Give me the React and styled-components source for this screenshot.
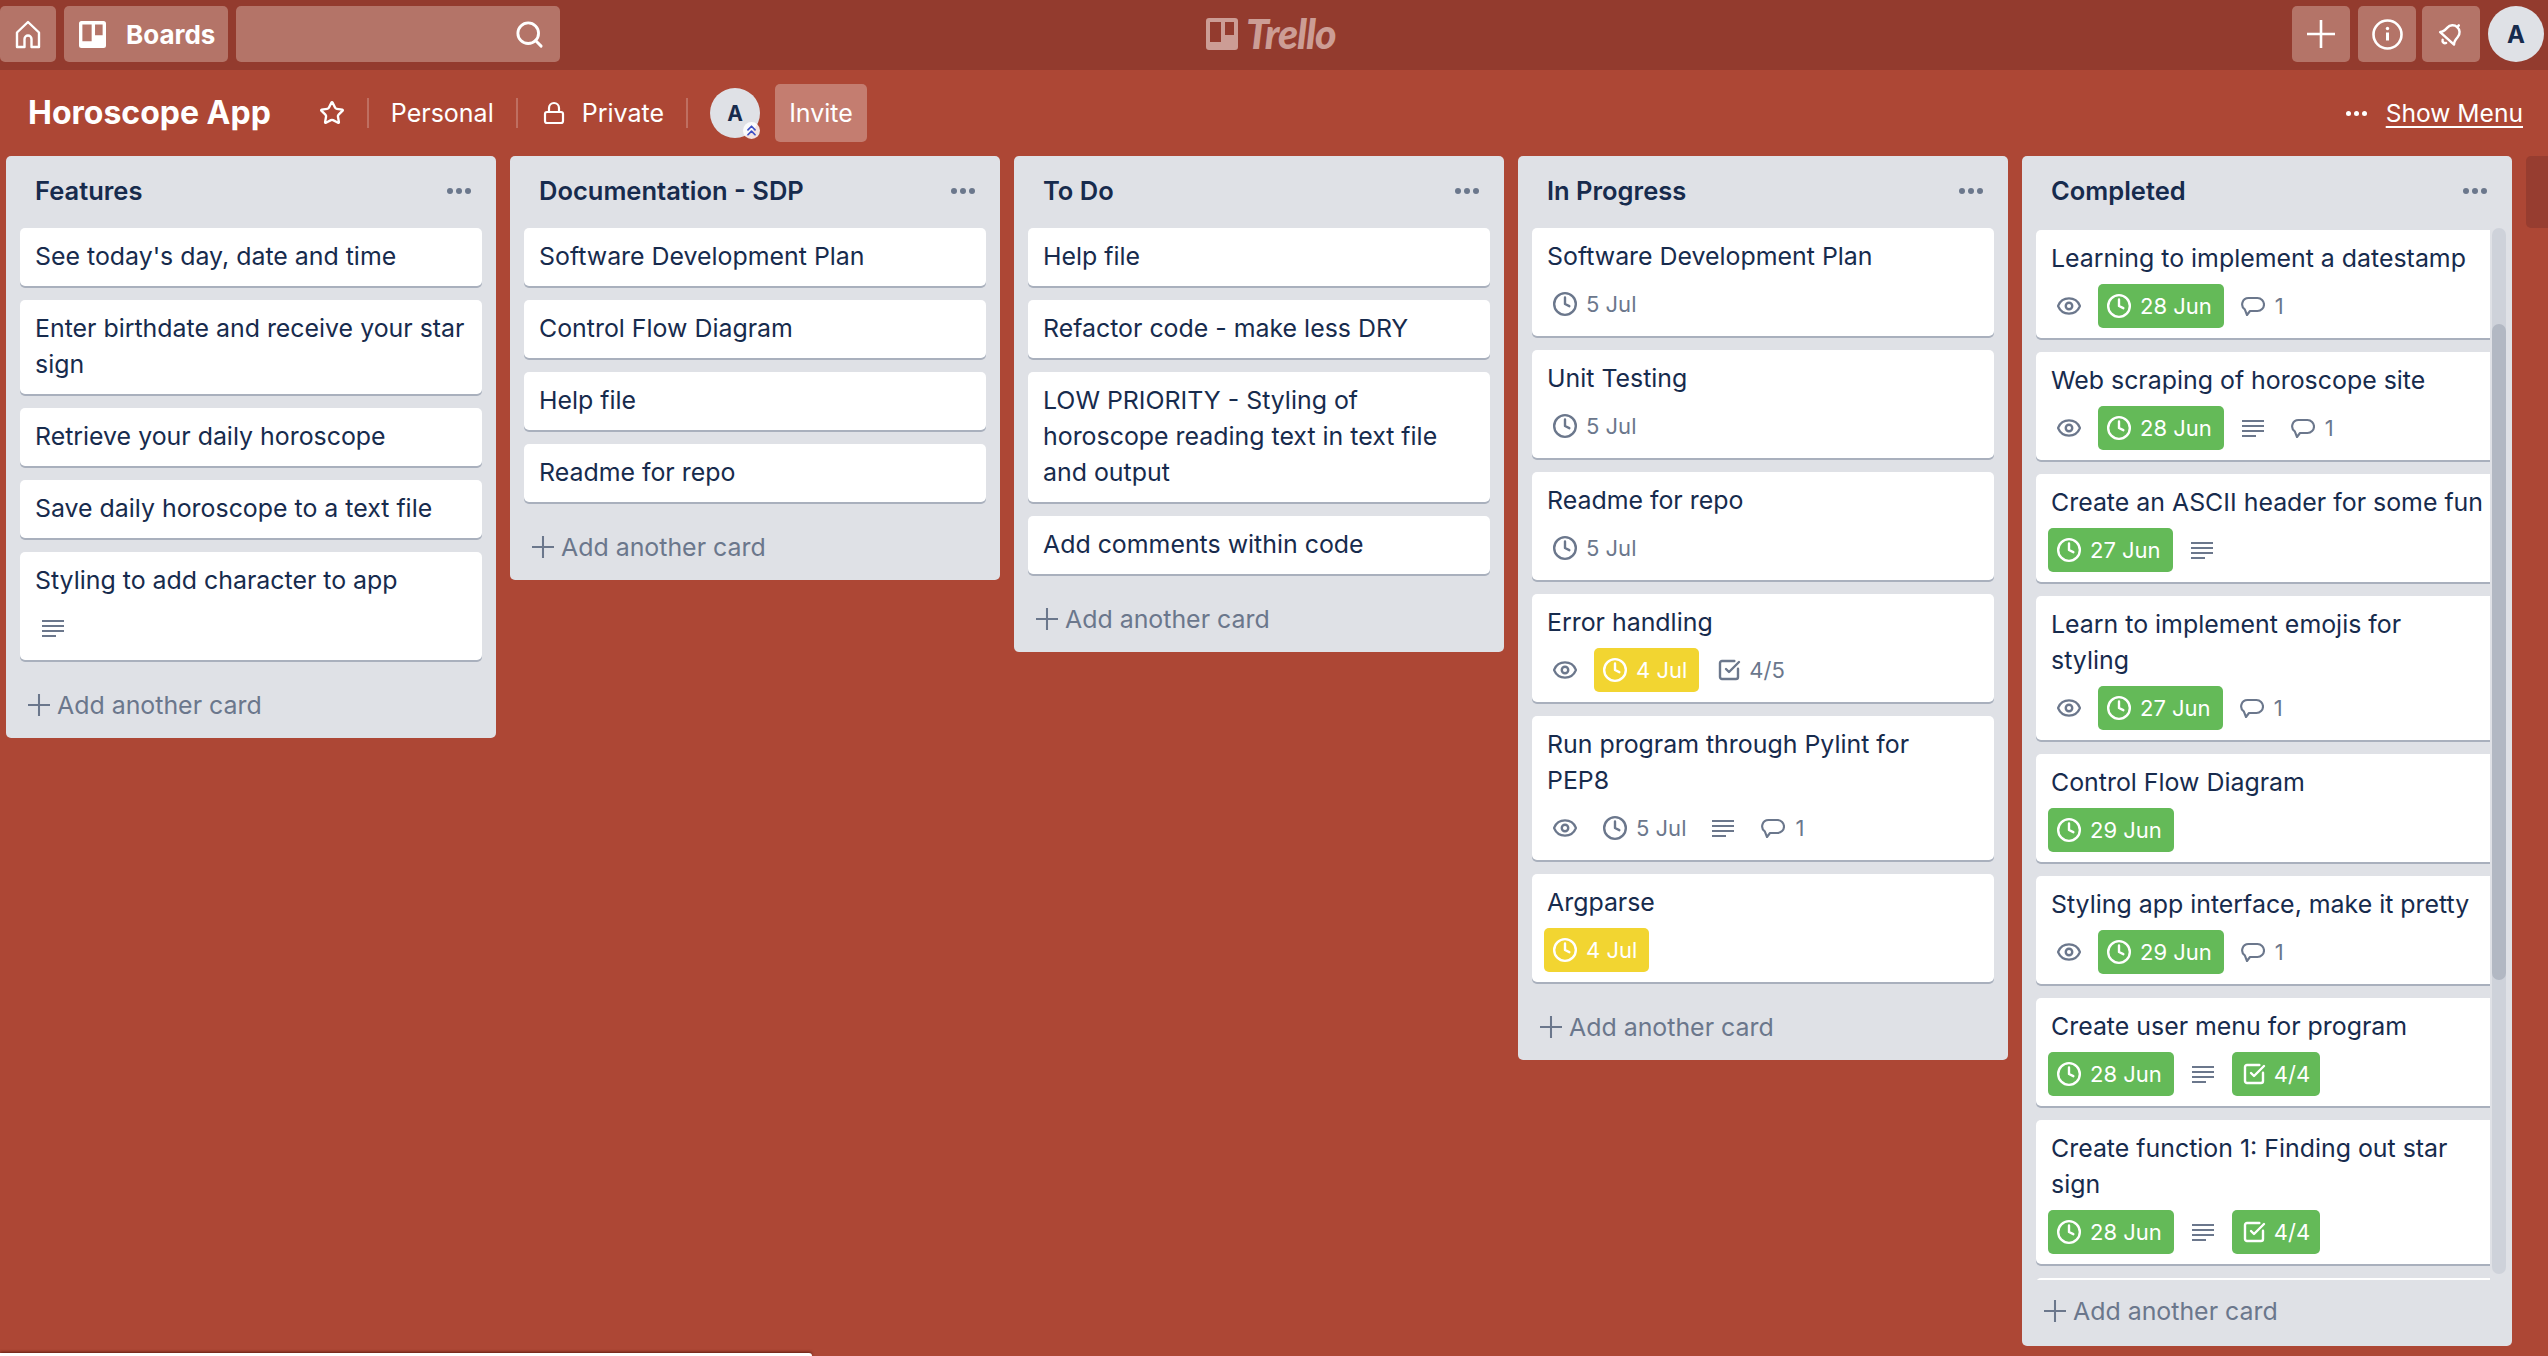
import React from 'react'
import styled, { createGlobalStyle } from 'styled-components'
import { ChevronsUp, Clock, Eye, Lock, Search, SquareCheckBig, Star } from 'lucide-react'

const GlobalStyle = createGlobalStyle`
  html, body {
    margin: 0;
    height: 100%;
    overflow: hidden;
    background: #ad4735;
    font-family: Inter, "Noto Sans", "Liberation Sans", sans-serif;
  }
`

const lists = [
  {
    name: 'Features',
    cards: [
      { title: "See today's day, date and time" },
      { title: 'Enter birthdate and receive your star\nsign' },
      { title: 'Retrieve your daily horoscope' },
      { title: 'Save daily horoscope to a text file' },
      { title: 'Styling to add character to app', desc: true },
    ],
  },
  {
    name: 'Documentation - SDP',
    cards: [
      { title: 'Software Development Plan' },
      { title: 'Control Flow Diagram' },
      { title: 'Help file' },
      { title: 'Readme for repo' },
    ],
  },
  {
    name: 'To Do',
    cards: [
      { title: 'Help file' },
      { title: 'Refactor code - make less DRY' },
      { title: 'LOW PRIORITY - Styling of\nhoroscope reading text in text file\nand output' },
      { title: 'Add comments within code' },
    ],
  },
  {
    name: 'In Progress',
    cards: [
      { title: 'Software Development Plan', date: '5 Jul' },
      { title: 'Unit Testing', date: '5 Jul' },
      { title: 'Readme for repo', date: '5 Jul' },
      { title: 'Error handling', eye: true, date: '4 Jul', dateColor: 'yellow', check: '4/5' },
      { title: 'Run program through Pylint for\nPEP8', eye: true, date: '5 Jul', desc: true, comments: 1 },
      { title: 'Argparse', date: '4 Jul', dateColor: 'yellow' },
    ],
  },
  {
    name: 'Completed',
    scrolling: true,
    cards: [
      { title: 'Learning to implement a datestamp', eye: true, date: '28 Jun', dateColor: 'green', comments: 1 },
      { title: 'Web scraping of horoscope site', eye: true, date: '28 Jun', dateColor: 'green', desc: true, comments: 1 },
      { title: 'Create an ASCII header for some fun', date: '27 Jun', dateColor: 'green', desc: true },
      { title: 'Learn to implement emojis for\nstyling', eye: true, date: '27 Jun', dateColor: 'green', comments: 1 },
      { title: 'Control Flow Diagram', date: '29 Jun', dateColor: 'green' },
      { title: 'Styling app interface, make it pretty', eye: true, date: '29 Jun', dateColor: 'green', comments: 1 },
      { title: 'Create user menu for program', date: '28 Jun', dateColor: 'green', desc: true, check: '4/4', checkColor: 'green' },
      { title: 'Create function 1: Finding out star\nsign', date: '28 Jun', dateColor: 'green', desc: true, check: '4/4', checkColor: 'green' },
      { title: '' },
    ],
  },
]

const badgeColors = { green: '#64ba58', yellow: '#f2d531' }

export default function App() {
  return (
    <Page>
      <GlobalStyle />
      <TopBar>
        <TopGroup>
          <HomeButton aria-label="Home"><HomeIcon /></HomeButton>
          <BoardsButton><BoardsIcon size={27} /> Boards</BoardsButton>
          <SearchBox><Search size={31} strokeWidth={2.2} color="#fff" /></SearchBox>
        </TopGroup>
        <Logo>
          <BoardsIcon size={32} />
          <LogoText>Trello</LogoText>
        </Logo>
        <TopRight>
          <SquareButton aria-label="Create"><PlusIcon size={28} /></SquareButton>
          <SquareButton aria-label="Info"><InfoIcon /></SquareButton>
          <BellButton aria-label="Notifications"><BellIcon /></BellButton>
          <UserAvatar>A</UserAvatar>
        </TopRight>
      </TopBar>

      <BoardBar>
        <BoardTitle>Horoscope App</BoardTitle>
        <StarIcon size={26} strokeWidth={2.2} color="#fff" />
        <Divider />
        <BarText>Personal</BarText>
        <Divider />
        <PrivateGroup>
          <Lock size={24} strokeWidth={2.2} color="#fff" />
          <BarText>Private</BarText>
        </PrivateGroup>
        <Divider />
        <MemberAvatar>
          A
          <AdminMark><ChevronsUp size={17} strokeWidth={2.4} color="#3d4fc4" /></AdminMark>
        </MemberAvatar>
        <InviteButton>Invite</InviteButton>
        <MenuLink>
          <MenuDots><i /><i /><i /></MenuDots>
          <ShowMenu>Show Menu</ShowMenu>
        </MenuLink>
      </BoardBar>

      <Board>
        {lists.map((list) => <BoardList key={list.name} list={list} />)}
        <AddList />
      </Board>
      <BottomStrip />
    </Page>
  )
}

function BoardList({ list }) {
  const cards = list.cards.map((card, i) => <BoardCard key={i} card={card} />)
  return (
    <List>
      <ListHeader>
        <ListName>{list.name}</ListName>
        <ListDots><i /><i /><i /></ListDots>
      </ListHeader>
      {list.scrolling ? (
        <ScrollRow>
          <ScrollClip>{cards}</ScrollClip>
          <ScrollTrack><ScrollThumb /></ScrollTrack>
        </ScrollRow>
      ) : (
        <Cards>{cards}</Cards>
      )}
      <AddCard $scrolling={list.scrolling}>
        <PlusIcon size={22} />
        Add another card
      </AddCard>
    </List>
  )
}

function BoardCard({ card }) {
  const hasMeta = card.eye || card.date || card.desc || card.check || card.comments
  return (
    <Card>
      <CardTitle $meta={hasMeta}>{card.title}</CardTitle>
      {hasMeta && (
        <Meta>
          {card.eye && <MetaItem><Eye size={26} strokeWidth={2.2} /></MetaItem>}
          {card.date && (
            <MetaItem $color={card.dateColor}>
              <Clock size={26} strokeWidth={2.2} />
              {card.date}
            </MetaItem>
          )}
          {card.desc && <DescItem><DescIcon /></DescItem>}
          {card.comments && <CommentItem><CommentIcon />{card.comments}</CommentItem>}
          {card.check && (
            <CheckItem $color={card.checkColor}>
              <SquareCheckBig size={24} strokeWidth={2.4} />
              {card.check}
            </CheckItem>
          )}
        </Meta>
      )}
    </Card>
  )
}

function HomeIcon() {
  return (
    <svg width="28" height="29" viewBox="0 0 28 29" fill="none" stroke="#fff" strokeWidth="2.4" strokeLinejoin="round">
      <path d="M14 2 3 12.5V27h7.5v-8a3.5 3.5 0 0 1 7 0v8H25V12.5Z" />
    </svg>
  )
}

function BoardsIcon({ size }) {
  return (
    <svg width={size} height={size} viewBox="0 0 32 32" fill="currentColor">
      <path
        fillRule="evenodd"
        d="M3 0h26a3 3 0 0 1 3 3v26a3 3 0 0 1-3 3H3a3 3 0 0 1-3-3V3a3 3 0 0 1 3-3Zm1 4v20h11V4Zm15 0v13h9V4Z"
      />
    </svg>
  )
}

function PlusIcon({ size }) {
  return (
    <svg width={size} height={size} viewBox="0 0 28 28" stroke="currentColor" strokeWidth="2.6" fill="none">
      <path d="M14 0v28M0 14h28" />
    </svg>
  )
}

function InfoIcon() {
  return (
    <svg width="31" height="31" viewBox="0 0 31 31" fill="none" stroke="#fff" strokeWidth="2.6">
      <circle cx="15.5" cy="15.5" r="14" />
      <path d="M15.5 13.5v8" strokeWidth="3" />
      <circle cx="15.5" cy="9.5" r="1.7" fill="#fff" stroke="none" />
    </svg>
  )
}

function BellIcon() {
  return (
    <svg width="28" height="28" viewBox="0 0 24 24" fill="none" stroke="#fff" strokeWidth="2.1" strokeLinejoin="round" strokeLinecap="round">
      <path d="M4 17c1.600-1.600 2-3.400 2-7a6 6 0 0 1 12 0c0 3.600.4 5.400 2 7Z" />
      <path d="M10 20.500a2.200 2.200 0 0 0 4 0M12 2v2" />
    </svg>
  )
}

function DescIcon() {
  return (
    <svg width="22" height="18" viewBox="0 0 22 18" fill="none" stroke="currentColor" strokeWidth="2">
      <path d="M0 2h22M0 7h22M0 12h22M0 17h14" />
    </svg>
  )
}

function CommentIcon() {
  return (
    <svg width="24" height="20" viewBox="0 0 24 20" fill="none" stroke="currentColor" strokeWidth="2.1" strokeLinejoin="round">
      <path d="M9 15h7.500a6.300 6.300 0 0 0 0-13h-9a6.300 6.300 0 0 0-3.700 11.400L6 19Z" />
    </svg>
  )
}

const Page = styled.div`
  position: relative;
  height: 100vh;
  overflow: hidden;
  background: #ad4735;
`

const TopBar = styled.header`
  display: grid;
  grid-template-columns: 1fr auto 1fr;
  align-items: center;
  height: 70px;
  box-sizing: border-box;
  padding: 6px 4px 8px 0;
  background: #933b2e;
`

const TopGroup = styled.div`
  display: flex;
  gap: 8px;
`

const TopRight = styled.div`
  display: flex;
  justify-content: flex-end;
  align-items: center;
  gap: 8px;
`

const TopButton = styled.button`
  display: flex;
  align-items: center;
  justify-content: center;
  height: 56px;
  padding: 0;
  border: 0;
  border-radius: 5px;
  background: #b47468;
  color: #fff;
  font: inherit;
`

const HomeButton = styled(TopButton)`
  width: 56px;
`

const BoardsButton = styled(TopButton)`
  width: 164px;
  justify-content: flex-start;
  gap: 20px;
  padding-left: 15px;
  box-sizing: border-box;
  font-size: 26px;
  font-weight: 700;
`

const SearchBox = styled(TopButton)`
  width: 324px;
  justify-content: flex-end;
  padding-right: 15px;
  box-sizing: border-box;
`

const SquareButton = styled(TopButton)`
  width: 58px;
`

const BellButton = styled(SquareButton)`
  margin-left: -2px;

  svg {
    transform: rotate(42deg);
  }
`

const Logo = styled.div`
  display: flex;
  align-items: center;
  gap: 8px;
  color: #cc9d95;
`

const LogoText = styled.span`
  display: block;
  width: 92px;
  font-family: Lato, sans-serif;
  font-size: 41px;
  font-style: italic;
  font-weight: 900;
  line-height: 44px;
  letter-spacing: -1px;
`

const UserAvatar = styled.div`
  display: flex;
  align-items: center;
  justify-content: center;
  width: 56px;
  height: 56px;
  border-radius: 50%;
  background: #dfe1e6;
  color: #172b4d;
  font-size: 24px;
  font-weight: 700;
`

const BoardBar = styled.div`
  display: flex;
  align-items: center;
  height: 86px;
  box-sizing: border-box;
  padding: 0 25px 0 28px;
`

const BoardTitle = styled.h1`
  margin: 0 48px 0 0;
  color: #fff;
  font-size: 32px;
  font-weight: 700;
  line-height: 40px;
`

const StarIcon = styled(Star)`
  flex: none;
`

const Divider = styled.span`
  width: 2px;
  height: 30px;
  margin: 0 22px;
  background: rgba(255, 255, 255, 0.22);
`

const BarText = styled.span`
  color: #fff;
  font-size: 25px;
  line-height: 36px;
`

const PrivateGroup = styled.div`
  display: flex;
  align-items: center;
  gap: 16px;
  margin-left: 2px;
`

const MemberAvatar = styled.div`
  position: relative;
  display: flex;
  align-items: center;
  justify-content: center;
  width: 50px;
  height: 50px;
  border-radius: 50%;
  background: #dfe1e6;
  color: #172b4d;
  font-size: 21px;
  font-weight: 700;
`

const AdminMark = styled.span`
  position: absolute;
  right: 0;
  bottom: -1px;
  display: flex;
  width: 17px;
  height: 17px;
  border-radius: 50%;
  background: rgba(255, 255, 255, 0.85);
`

const InviteButton = styled.button`
  width: 92px;
  height: 58px;
  margin-left: 15px;
  padding: 0;
  border: 0;
  border-radius: 5px;
  background: #c47d70;
  color: #fff;
  font: inherit;
  font-size: 25px;
`

const MenuLink = styled.div`
  display: flex;
  align-items: center;
  gap: 19px;
  margin-left: auto;
`

const MenuDots = styled.span`
  display: flex;
  gap: 3px;

  i {
    width: 5px;
    height: 5px;
    border-radius: 50%;
    background: #fff;
  }
`

const ShowMenu = styled.span`
  color: #fff;
  font-size: 24.600px;
  line-height: 36px;
  text-decoration: underline;
  text-decoration-thickness: 2px;
  text-underline-offset: 4px;
`

const Board = styled.main`
  display: flex;
  align-items: flex-start;
  gap: 14px;
  padding-left: 6px;
`

const List = styled.section`
  flex: none;
  width: 490px;
  border-radius: 5px;
  background: #dfe1e6;
`

const ListHeader = styled.div`
  display: flex;
  align-items: center;
  justify-content: space-between;
  height: 72px;
  box-sizing: border-box;
  padding: 0 25px 2px 29px;
`

const ListName = styled.h2`
  margin: 0;
  color: #172b4d;
  font-size: 25.500px;
  font-weight: 600;
  line-height: 36px;
`

const ListDots = styled.span`
  display: flex;
  gap: 3px;

  i {
    width: 6px;
    height: 6px;
    border-radius: 50%;
    background: #6b778c;
  }
`

const Cards = styled.div`
  display: flex;
  flex-direction: column;
  gap: 14px;
  padding: 0 14px;
`

const ScrollRow = styled.div`
  display: flex;
  align-items: flex-start;
  gap: 2px;
  padding-left: 14px;
`

const ScrollClip = styled.div`
  display: flex;
  flex-direction: column;
  gap: 14px;
  width: 454px;
  height: 1052px;
  box-sizing: border-box;
  padding-top: 2px;
  overflow: hidden;
`

const ScrollTrack = styled.div`
  width: 14px;
  height: 1046px;
  padding-top: 96px;
  box-sizing: border-box;
  border-radius: 7px;
  background: #ced2da;
`

const ScrollThumb = styled.div`
  height: 656px;
  border-radius: 7px;
  background: #b2b8c3;
`

const Card = styled.article`
  flex: none;
  width: 462px;
  box-sizing: border-box;
  padding: 10px 0 10px;
  border-radius: 5px;
  background: #fff;
  box-shadow: 0 2px 0 rgba(9, 30, 66, 0.25);
`

const CardTitle = styled.div`
  min-height: 36px;
  margin-bottom: ${(p) => (p.$meta ? '8px' : '2px')};
  padding: 0 0 0 15px;
  color: #172b4d;
  font-size: 24.900px;
  line-height: 36px;
  white-space: pre-line;
`

const Meta = styled.div`
  display: flex;
  align-items: center;
  gap: 8px;
  height: 44px;
  padding-left: 12px;
`

const MetaItem = styled.span`
  display: flex;
  align-items: center;
  gap: 8px;
  height: 44px;
  box-sizing: border-box;
  padding: ${(p) => (p.$color ? '0 12px 0 8px' : '0 8px')};
  border-radius: 5px;
  background: ${(p) => badgeColors[p.$color] || 'transparent'};
  color: ${(p) => (p.$color ? '#fff' : '#6b778c')};
  font-size: 22px;
`

const DescItem = styled(MetaItem)`
  padding: 0 10px;
`

const CommentItem = styled(MetaItem)`
  gap: 10px;
  padding: 0 9px;
`

const CheckItem = styled(MetaItem)`
  padding: 0 10px;
`

const AddCard = styled.div`
  display: flex;
  align-items: center;
  gap: 7px;
  height: ${(p) => (p.$scrolling ? '66px' : '64px')};
  margin-top: ${(p) => (p.$scrolling ? '0' : '14px')};
  box-sizing: border-box;
  padding: 0 0 ${(p) => (p.$scrolling ? '4px' : '2px')} 22px;
  color: #6b778c;
  font-size: 24.900px;
`

const AddList = styled.div`
  flex: none;
  width: 490px;
  height: 72px;
  border-radius: 5px;
  background: #973d30;
`

const BottomStrip = styled.div`
  position: absolute;
  left: 0;
  bottom: 0;
  width: 812px;
  height: 3px;
  border-top-right-radius: 4px;
  background: #fff;
  box-shadow: 0 -1px 3px rgba(70, 15, 5, 0.8);
`
